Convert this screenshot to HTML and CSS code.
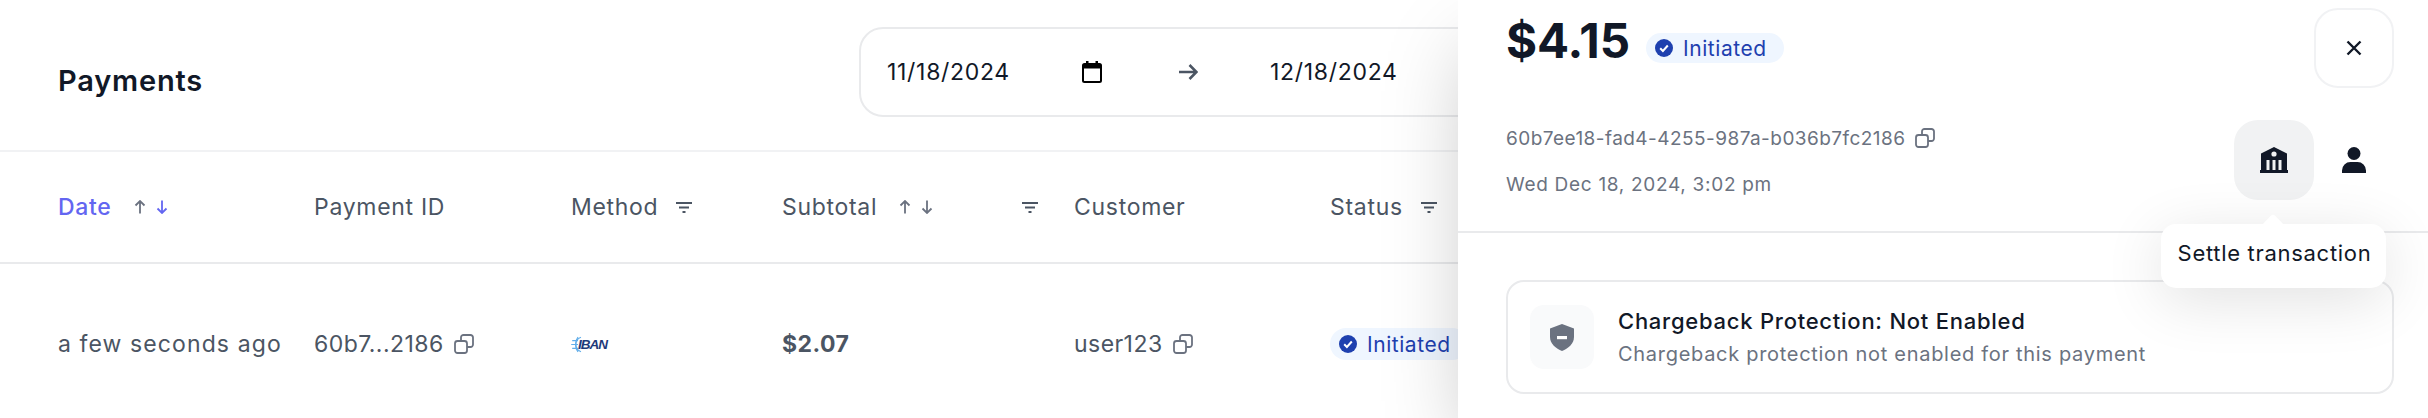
FILE: index.html
```html
<!DOCTYPE html>
<html lang="en">
<head>
<meta charset="utf-8">
<title>Payments</title>
<link rel="stylesheet" href="styles.css">
</head>
<body>
<main class="page">
  <header class="toolbar">
    <h1 class="page-title">Payments</h1>
    <div class="range">
      <div class="range-field">
        <span class="range-date">11/18/2024</span>
        <svg class="cal" width="20" height="22" viewBox="0 0 20 22"><path fill-rule="evenodd" d="M4 0h2.500v2h7V0H16v2h1.500A2.500 2.500 0 0 1 20 4.500v15a2.500 2.500 0 0 1-2.500 2.500h-15A2.500 2.500 0 0 1 0 19.500v-15A2.500 2.500 0 0 1 2.500 2H4zM2 7.500V19.500a.5.5 0 0 0 .5.5h15a.5.5 0 0 0 .5-.5V7.500z"/></svg>
      </div>
      <svg class="range-arrow" width="20" height="16" viewBox="0 0 20 16"><path d="M1 8h17M11.500 1l7 7-7 7" fill="none" stroke="#4b5563" stroke-width="2.600"/></svg>
      <span class="range-date">12/18/2024</span>
    </div>
  </header>

  <div class="table">
    <div class="head-row">
      <div class="th active">Date
        <span class="sort">
          <svg width="12" height="14" viewBox="0 0 12 14"><path class="ar-grey" d="M6 13.500V1M1.500 5.500 6 1l4.500 4.500"/></svg>
          <svg width="12" height="14" viewBox="0 0 12 14"><path class="ar-blue" d="M6 .5V13M1.500 8.500 6 13l4.500-4.500"/></svg>
        </span>
      </div>
      <div class="th">Payment ID</div>
      <div class="th">Method
        <svg class="filter" width="16" height="11" viewBox="0 0 16 11"><path d="M0 1h16M3 5.500h10M6.500 10h3"/></svg>
      </div>
      <div class="th th-sub">
        <span class="th-sub-label">Subtotal
          <span class="sort">
            <svg width="12" height="14" viewBox="0 0 12 14"><path class="ar-grey" d="M6 13.500V1M1.500 5.500 6 1l4.500 4.500"/></svg>
            <svg width="12" height="14" viewBox="0 0 12 14"><path class="ar-grey" d="M6 .5V13M1.500 8.500 6 13l4.500-4.500"/></svg>
          </span>
        </span>
        <svg class="filter" width="16" height="11" viewBox="0 0 16 11"><path d="M0 1h16M3 5.500h10M6.500 10h3"/></svg>
      </div>
      <div class="th">Customer</div>
      <div class="th">Status
        <svg class="filter" width="16" height="11" viewBox="0 0 16 11"><path d="M0 1h16M3 5.500h10M6.500 10h3"/></svg>
      </div>
    </div>
    <div class="body-row">
      <div class="td td-wide">a few seconds ago</div>
      <div class="td">60b7...2186
        <svg class="copy" width="20" height="20" viewBox="0 0 20 20"><rect x="1" y="7" width="12" height="12" rx="2.500"/><path d="M7 7V3.500A2.500 2.500 0 0 1 9.500 1h7A2.500 2.500 0 0 1 19 3.500v7a2.500 2.500 0 0 1-2.500 2.500H13"/></svg>
      </div>
      <div class="td">
        <span class="iban">
          <svg width="17" height="17" viewBox="0 0 17 17"><g fill="none" stroke="#62aeea" stroke-width="1.200"><path d="M11 1.300A7.600 7.600 0 0 0 11 15.700"/><path d="M8 1.200a12 12 0 0 0 0 14.600"/><path d="M1.200 8.500H8M2.200 4.700H8M2.200 12.300H8"/></g></svg>
          <span class="iban-text">IBAN</span>
        </span>
      </div>
      <div class="td amount">$2.07</div>
      <div class="td">user123
        <svg class="copy" width="20" height="20" viewBox="0 0 20 20"><rect x="1" y="7" width="12" height="12" rx="2.500"/><path d="M7 7V3.500A2.500 2.500 0 0 1 9.500 1h7A2.500 2.500 0 0 1 19 3.500v7a2.500 2.500 0 0 1-2.500 2.500H13"/></svg>
      </div>
      <div class="td">
        <span class="badge">
          <svg width="18" height="18" viewBox="0 0 18 18"><circle cx="9" cy="9" r="9" fill="#1e40af"/><path d="M5.200 9.300 7.900 12l4.900-5.500" fill="none" stroke="#fff" stroke-width="2"/></svg>
          <span class="badge-text">Initiated</span>
        </span>
      </div>
    </div>
  </div>
</main>

<aside class="panel">
  <div class="panel-head">
    <div class="title-row">
      <div class="title-left">
        <span class="total">$4.15</span>
        <span class="badge badge-panel">
          <svg width="18" height="18" viewBox="0 0 18 18"><circle cx="9" cy="9" r="9" fill="#1e40af"/><path d="M5.200 9.300 7.900 12l4.900-5.500" fill="none" stroke="#fff" stroke-width="2"/></svg>
          <span class="badge-text">Initiated</span>
        </span>
      </div>
      <button class="close" type="button" aria-label="Close">
        <svg width="16" height="16" viewBox="0 0 16 16"><path d="M1.500 1.500l13 13M14.500 1.500l-13 13" stroke="#111827" stroke-width="2.400" fill="none"/></svg>
      </button>
    </div>
    <div class="meta-row">
      <div class="meta">
        <div class="meta-id">60b7ee18-fad4-4255-987a-b036b7fc2186
          <svg class="copy" width="20" height="20" viewBox="0 0 20 20"><rect x="1" y="7" width="12" height="12" rx="2.500"/><path d="M7 7V3.500A2.500 2.500 0 0 1 9.500 1h7A2.500 2.500 0 0 1 19 3.500v7a2.500 2.500 0 0 1-2.500 2.500H13"/></svg>
        </div>
        <div class="meta-date">Wed Dec 18, 2024, 3:02 pm</div>
      </div>
      <div class="actions">
        <button class="action is-on" type="button" aria-label="Settle transaction">
          <svg width="28" height="26" viewBox="0 0 28 26"><path fill="#111827" fill-rule="evenodd" d="M14 0 27 6.500V23h1v3H0v-3h1V6.500zM14 4.400a2.600 2.600 0 1 0 0 5.200 2.600 2.600 0 0 0 0-5.200zM6.500 13v10H9.500V13zM12.500 13v10h3V13zM18.500 13v10h3V13z"/></svg>
        </button>
        <button class="action" type="button" aria-label="Customer">
          <svg width="24" height="26" viewBox="0 0 24 26"><circle cx="12" cy="6.500" r="6.500" fill="#111827"/><path fill="#111827" d="M0 26v-2.500A8.500 8.500 0 0 1 8.500 15h7a8.500 8.500 0 0 1 8.500 8.500V26z"/></svg>
        </button>
      </div>
    </div>
  </div>
  <section class="card">
    <div class="card-icon">
      <svg width="24" height="27" viewBox="0 0 24 27"><path fill="#6b7280" d="M12 0 24 4.500V13C24 20 18 24.500 12 27 6 24.500 0 20 0 13V4.500z"/><rect x="7" y="12" width="10" height="3.200" fill="#fff"/></svg>
    </div>
    <div class="card-copy">
      <div class="card-title">Chargeback Protection: Not Enabled</div>
      <div class="card-sub">Chargeback protection not enabled for this payment</div>
    </div>
  </section>
  <div class="tooltip">Settle transaction</div>
</aside>
</body>
</html>
```

FILE: styles.css
```css
* { box-sizing: border-box; }
html, body { margin: 0; height: 100%; }
body {
  position: relative;
  width: 2428px;
  height: 418px;
  overflow: hidden;
  background: #fff;
  font-family: Inter, "Noto Sans", sans-serif;
  color: #4b5563;
}
.page { width: 2428px; }

.toolbar {
  display: grid;
  grid-template-columns: 801px 1fr;
  align-items: center;
  height: 152px;
  padding-left: 58px;
  border-bottom: 2px solid #f1f2f4;
}
.page-title { margin: 10px 0 0; font-size: 29px; font-weight: 600; color: #111827; letter-spacing: .8px; }
.range {
  display: flex;
  align-items: center;
  width: 800px;
  height: 90px;
  margin-bottom: 6px;
  padding-left: 26px;
  border: 2px solid #e9eaec;
  border-radius: 24px;
}
.range-field { display: flex; align-items: center; justify-content: space-between; width: 215px; margin-right: 76px; }
.range-date { font-size: 23px; color: #111827; letter-spacing: .7px; }
.range-arrow { margin-right: 72px; }
.cal { display: block; }

.head-row, .body-row {
  display: grid;
  grid-template-columns: 256px 257px 211px 292px 256px 300px;
  padding-left: 58px;
}
.head-row { height: 112px; border-bottom: 2px solid #e9eaec; align-items: center; }
.body-row { height: 160px; align-items: center; }
.th, .td { display: flex; align-items: center; white-space: nowrap; font-size: 23px; }
.th { color: #4b5563; letter-spacing: .7px; }
.td { letter-spacing: .45px; }
.td-wide { letter-spacing: 1.100px; }
.th.active { color: #6366f1; font-weight: 500; }
.filter { margin-left: 18px; }
.filter path { stroke: #4b5563; stroke-width: 2; fill: none; }
.sort { display: inline-flex; gap: 10px; margin-left: 22px; }
.sort svg path { fill: none; stroke-width: 1.800; }
.ar-grey { stroke: #6b7280; }
.ar-blue { stroke: #6366f1; }
.th-sub { justify-content: space-between; padding-right: 36px; }
.th-sub-label { display: inline-flex; align-items: center; }

.copy { margin-left: 10px; flex: none; }
.copy rect, .copy path { fill: none; stroke: #6b7280; stroke-width: 1.800; }
.amount { font-weight: 700; color: #4b5563; }

.iban { display: inline-flex; align-items: center; margin-left: -1px; }
.iban-text {
  margin-left: -9px;
  font-family: "Liberation Sans", sans-serif;
  font-style: italic;
  font-weight: 700;
  font-size: 13.500px;
  letter-spacing: -1px;
  color: #1e3a7a;
}

.badge {
  display: inline-flex;
  align-items: center;
  gap: 10px;
  height: 32px;
  padding: 0 17px 0 9px;
  border-radius: 16px;
  background: #eff6ff;
  font-size: 21px;
  letter-spacing: .55px;
  color: #1e40af;
}
.badge-panel { height: 30px; margin-top: 16px; }

.panel {
  position: absolute;
  top: 0;
  right: 0;
  bottom: 0;
  width: 970px;
  background: #fff;
  box-shadow: 0 37px 80px -14px rgba(0, 0, 0, .25);
}
.panel-head { height: 233px; padding: 8px 34px 0 48px; border-bottom: 2px solid #e9eaec; }
.title-row { display: flex; align-items: flex-start; justify-content: space-between; }
.title-left { display: flex; align-items: center; gap: 16px; height: 64px; }
.total { font-size: 47.500px; font-weight: 700; color: #111827; }
.close {
  display: flex;
  align-items: center;
  justify-content: center;
  width: 80px;
  height: 80px;
  padding: 0;
  background: #fff;
  border: 2px solid #f1f2f4;
  border-radius: 24px;
}
.meta-row { display: flex; align-items: flex-start; justify-content: space-between; margin-top: 32px; }
.meta { font-size: 19px; color: #6b7280; }
.meta-id { display: flex; align-items: center; height: 36px; letter-spacing: .45px; }
.meta-date { margin-top: 17px; letter-spacing: .7px; }
.actions { display: flex; }
.action {
  display: flex;
  align-items: center;
  justify-content: center;
  width: 80px;
  height: 80px;
  padding: 0;
  background: none;
  border: 0;
  border-radius: 24px;
}
.action.is-on { background: #f1f2f3; }

.card {
  display: flex;
  align-items: center;
  gap: 24px;
  height: 114px;
  margin: 47px 34px 0 48px;
  padding: 0 22px;
  border: 2px solid #e9eaec;
  border-radius: 18px;
}
.card-icon {
  display: flex;
  align-items: center;
  justify-content: center;
  width: 64px;
  height: 64px;
  border-radius: 14px;
  background: #f9fafb;
}
.card-title { font-size: 22px; font-weight: 500; color: #111827; letter-spacing: .75px; }
.card-sub { margin-top: 8px; font-size: 20px; color: #6b7280; letter-spacing: .7px; }

.tooltip {
  position: absolute;
  left: 703px;
  top: 224px;
  width: 225px;
  height: 64px;
  padding: 16px 0 0 2px;
  border-radius: 15px;
  background: #fff;
  text-align: center;
  font-size: 22px;
  letter-spacing: .7px;
  color: #111827;
  box-shadow: 0 12px 60px 0 rgba(0, 0, 0, .12);
}
.tooltip::before {
  content: "";
  position: absolute;
  left: 104px;
  top: -7px;
  width: 16px;
  height: 16px;
  border-radius: 3px;
  background: #fff;
  transform: rotate(45deg);
}
```
